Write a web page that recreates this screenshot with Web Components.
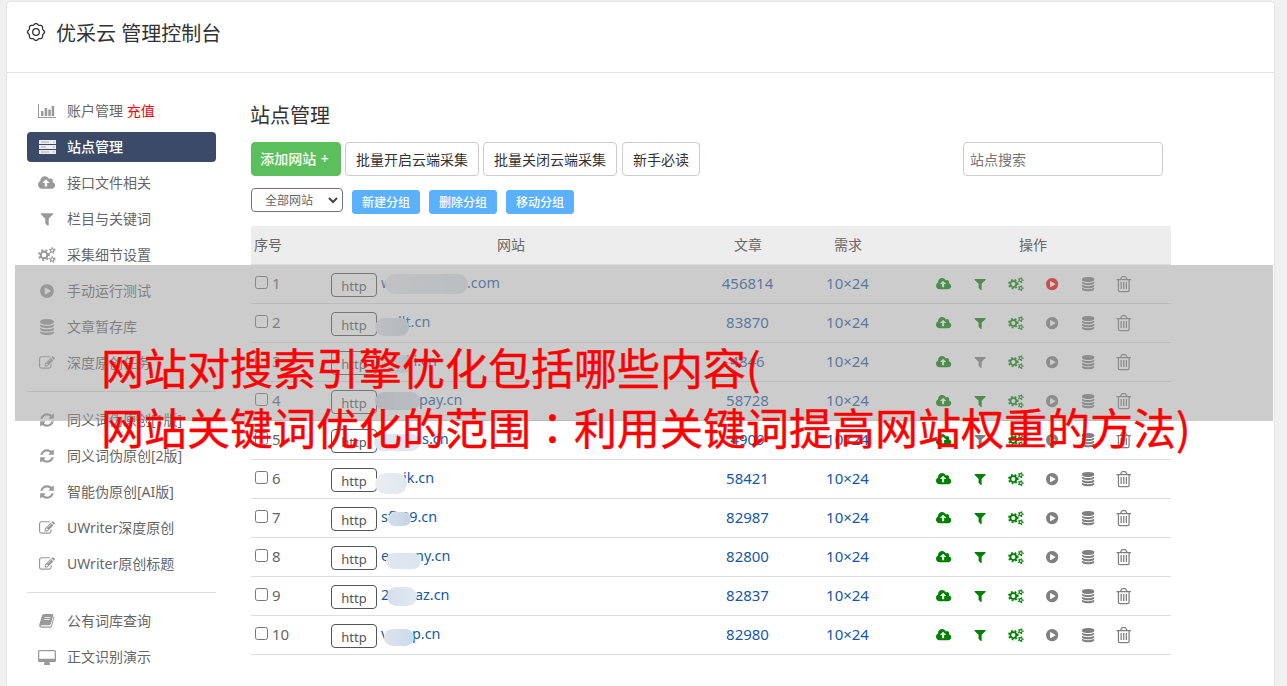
<!DOCTYPE html>
<html lang="zh-CN">
<head>
<meta charset="utf-8">
<title>优采云 管理控制台</title>
<style>
    body {
        margin: 0;
        height: 686px;
        overflow: hidden;
        position: relative;
        background: #f0f0f0;
        color: #666;
        font: 14px/20px "Noto Sans", "Noto Sans CJK SC", sans-serif;
    }
</style>
</head>
<body>
<console-app></console-app>
<title-banner>
    <span>网站对搜索引擎优化包括哪些内容(</span>
    <span slot="second">网站关键词优化的范围<span lang="zh-TW" style="font-family:'Noto Sans CJK TC'">：</span>利用关键词提高网站权重的方法)</span>
</title-banner>

<script>
const gear = (cx, cy, r, w, n) => {
    const step = 2 * Math.PI * (r + w) / (n * 2);
    return `<circle cx="${cx}" cy="${cy}" r="${r}" fill="none" stroke="currentColor" stroke-width="${w}"/>
        <circle cx="${cx}" cy="${cy}" r="${r + w * 0.8}" fill="none" stroke="currentColor" stroke-width="${w}" stroke-dasharray="${step}" stroke-dashoffset="${step / 2}"/>`;
};

// outline of the wavy gear in the page header
const wavyGear = () => {
    const pts = [];
    for (let i = 0; i < 160; i++) {
        const a = i / 160 * 2 * Math.PI;
        const r = 7.9 + 0.6 * Math.cos(8 * a);
        pts.push((9 + r * Math.sin(a)).toFixed(2) + ',' + (9 - r * Math.cos(a)).toFixed(2));
    }
    return `<g fill="none" stroke="currentColor" stroke-width="1.3"><path d="M${pts.join('L')}z"/><circle cx="9" cy="9" r="3.3"/></g>`;
};

// name: [viewBox, width, height, content]
const icons = {
    gear: ['0 0 18 18', 18, 18, wavyGear()],
    chart: ['0 0 18 14', 18, 14, '<path d="M0 0h1v13h17v1H0zM3 7h2.5v5H3zM6.7 4h2.5v8H6.700zM10.300 5.500h2.500v6.500h-2.500zM13.700 2h2.500v10h-2.500z"/>'],
    server: ['0 0 17 14', 17, 14, '<path d="M0 0h17v4H0zM0 5h17v4H0zM0 10h17v4H0z"/><path fill="#3b4a66" opacity=".4" d="M2 1.500h8v1H2zM2 6.500h5v1H2zM2 11.500h8v1H2zM14 1.500h1.500v1H14zM14 6.500h1.500v1H14zM14 11.500h1.500v1H14z"/>'],
    cloud: ['-64 0 1920 1792', 17.100, 16, '<path d="M1216 864q0-14-9-23l-352-352q-9-9-23-9t-23 9l-351 351q-10 12-10 24 0 14 9 23t23 9h224v352q0 13 9.500 22.500t22.500 9.500h192q13 0 22.500-9.500t9.500-22.500v-352h224q13 0 22.500-9.500t9.500-22.500zm640 288q0 159-112.500 271.500t-271.500 112.500h-1088q-185 0-316.500-131.500t-131.500-316.500q0-130 70-240t188-165q-2-30-2-43 0-212 150-362t362-150q156 0 285.500 87t188.500 231q71-62 166-62 106 0 181 75t75 181q0 76-41 138 130 31 213.500 135.500t83.500 238.500z"/>'],
    filter: ['0 0 1792 1792', 16, 16, '<path d="M1595 295q17 41-14 70l-493 493v742q0 42-39 59-13 5-25 5-27 0-45-19l-256-256q-19-19-19-45v-486l-493-493q-31-29-14-70 17-39 59-39h1280q42 0 59 39z"/>'],
    cogs: ['0 0 18 16', 18, 16, gear(6, 8, 3.300, 2, 8) + gear(14.300, 3.500, 1.700, 1.200, 6) + gear(14.300, 12.500, 1.700, 1.200, 6)],
    play: ['0 0 1792 1792', 16, 16, '<path d="M896 128q209 0 385.500 103t279.500 279.500 103 385.500-103 385.500-279.500 279.500-385.500 103-385.500-103-279.500-279.500-103-385.500 103-385.500 279.500-279.500 385.500-103zm384 823q32-18 32-55t-32-55l-544-320q-31-19-64-1-32 19-32 56v640q0 37 32 56 16 8 32 8 17 0 32-9z"/>'],
    database: ['0 0 1792 1792', 16, 16, '<path d="M896 768q237 0 443-43t325-127v170q0 69-103 128t-280 93.500-385 34.500-385-34.500-280-93.500-103-128v-170q119 84 325 127t443 43zm0 768q237 0 443-43t325-127v170q0 69-103 128t-280 93.500-385 34.500-385-34.500-280-93.500-103-128v-170q119 84 325 127t443 43zm0-384q237 0 443-43t325-127v170q0 69-103 128t-280 93.500-385 34.500-385-34.500-280-93.500-103-128v-170q119 84 325 127t443 43zm0-1152q208 0 385 34.500t280 93.500 103 128v128q0 69-103 128t-280 93.500-385 34.500-385-34.500-280-93.500-103-128v-128q0-69 103-128t280-93.500 385-34.500z"/>'],
    edit: ['0 0 1792 1792', 16, 16, '<path d="M888 1184l116-116-152-152-116 116v56h96v96h56zm440-720q-16-16-33 1l-350 350q-17 17-1 33t33-1l350-350q17-17 1-33zm80 594v190q0 119-84.500 203.500t-203.500 84.500h-832q-119 0-203.500-84.500t-84.500-203.500v-832q0-119 84.500-203.500t203.500-84.500h832q63 0 117 25 15 7 18 23 3 17-9 29l-49 49q-14 14-32 8-23-6-45-6h-832q-66 0-113 47t-47 113v832q0 66 47 113t113 47h832q66 0 113-47t47-113v-126q0-13 9-22l64-64q15-15 35-7t20 29zm-96-738l288 288-672 672h-288v-288zm444 132l-92 92-288-288 92-92q28-28 68-28t68 28l152 152q28 28 28 68t-28 68z"/>'],
    refresh: ['0 0 1792 1792', 16, 16, '<path d="M1639 1056q0 5-1 7-64 268-268 434.500t-478 166.500q-146 0-282.500-55t-243.500-157l-129 129q-19 19-45 19t-45-19-19-45v-448q0-26 19-45t45-19h448q26 0 45 19t19 45-19 45l-137 137q71 66 161 102t187 36q134 0 250-65t186-179q11-17 53-117 8-23 30-23h192q13 0 22.500 9.500t9.500 22.500zm25-800v448q0 26-19 45t-45 19h-448q-26 0-45-19t-19-45 19-45l138-138q-148-137-349-137-134 0-250 65t-186 179q-11 17-53 117-8 23-30 23h-199q-13 0-22.500-9.500t-9.500-22.500v-7q65-268 270-434.500t480-166.500q146 0 284 55.500t245 156.500l130-129q19-19 45-19t45 19 19 45z"/>'],
    book: ['0 0 16 14', 16, 14, '<path fill-rule="evenodd" d="M5.200 0h8q1.300 0 1 1.200l-2.300 8.600q-.4 1.400-1.700 1.400H2.500q-1 0-.8.8.1.6 1 .6h8.300q.8 0 1.100-.8L14.800 2q.9.500.6 1.500l-2.400 8.700q-.5 1.600-2 1.600H2.600Q0 13.800.2 11L3 1.500Q3.600 0 5.200 0zM5.800 3l-.2.800h5.800l.2-.8zM5.200 5.300l-.2.800h5.800l.2-.8z"/>'],
    desktop: ['0 0 18 15', 18, 15, '<path fill-rule="evenodd" d="M1.500 0h15Q18 0 18 1.500v9q0 1.500-1.500 1.500H11.300l.7 2v1H6v-1l.7-2H1.500Q0 12 0 10.500v-9Q0 0 1.500 0zM1.300 1.300v7.500h15.400V1.300z"/>'],
    trash: ['0 0 16 17', 16, 17, '<g fill="none" stroke="currentColor" stroke-width="1.300"><path d="M.5 3.800h15M4.600 3.500l1.200-2.200q.3-.6.9-.6h2.600q.6 0 .9.600l1.200 2.200M2.500 4v10.700q0 1.500 1.500 1.500h8q1.500 0 1.500-1.500V4M5.300 6.300v7M8 6.300v7M10.700 6.300v7"/></g>']
};

class UiIcon extends HTMLElement {
    connectedCallback() {
        const [box, w, h, content] = icons[this.getAttribute('name')];
        const scale = parseFloat(this.getAttribute('scale') || 1);
        this.attachShadow({mode: 'open'}).innerHTML = `
            <style>
                :host { display: inline-flex; align-items: center; justify-content: center; }
                svg { display: block; fill: currentColor; overflow: visible; }
            </style>
            <svg viewBox="${box}" width="${w * scale}" height="${h * scale}">${content}</svg>`;
    }
}
customElements.define('ui-icon', UiIcon);

class MenuItem extends HTMLElement {
    connectedCallback() {
        this.attachShadow({mode: 'open'}).innerHTML = `
            <style>
                :host { display: flex; align-items: center; height: 30px; padding-left: 10px; border-radius: 4px; white-space: nowrap; }
                :host([active]) { background: #3b4a66; color: #fff; font-weight: 500; }
                ui-icon { width: 20px; margin-right: 10px; color: #999; }
                :host([active]) ui-icon { color: #eee; }
            </style>
            <ui-icon name="${this.getAttribute('icon')}"></ui-icon><span><slot></slot></span>`;
    }
}
customElements.define('menu-item', MenuItem);

class SideMenu extends HTMLElement {
    connectedCallback() {
        this.attachShadow({mode: 'open'}).innerHTML = `
            <style>
                :host { display: flex; flex-direction: column; gap: 6px; width: 189px; }
                hr { width: 100%; height: 1px; margin: 7px 0; border: none; background: #ddd; }
                b { font-weight: 400; color: #f00; }
            </style>
            <menu-item icon="chart">账户管理 <b>充值</b></menu-item>
            <menu-item icon="server" active>站点管理</menu-item>
            <menu-item icon="cloud">接口文件相关</menu-item>
            <menu-item icon="filter">栏目与关键词</menu-item>
            <menu-item icon="cogs">采集细节设置</menu-item>
            <menu-item icon="play">手动运行测试</menu-item>
            <menu-item icon="database">文章暂存库</menu-item>
            <menu-item icon="edit">深度原创任务</menu-item>
            <hr>
            <menu-item icon="refresh">同义词伪原创[1版]</menu-item>
            <menu-item icon="refresh">同义词伪原创[2版]</menu-item>
            <menu-item icon="refresh">智能伪原创[AI版]</menu-item>
            <menu-item icon="edit">UWriter深度原创</menu-item>
            <menu-item icon="edit">UWriter原创标题</menu-item>
            <hr>
            <menu-item icon="book">公有词库查询</menu-item>
            <menu-item icon="desktop">正文识别演示</menu-item>`;
    }
}
customElements.define('side-menu', SideMenu);

class UiButton extends HTMLElement {
    connectedCallback() {
        this.attachShadow({mode: 'open'}).innerHTML = `
            <style>
                :host { display: flex; align-items: center; justify-content: center; box-sizing: border-box; height: 34px; padding-top: 2px; border: 1px solid #ccc; border-radius: 4px; color: #333; background: #fff; white-space: nowrap; }
                :host([kind=add]) { padding: 0 3px 0 0; background: #5bc05b; border-color: #5bc05b; color: #fff; font-weight: 500; word-spacing: 1px; }
                :host([kind=small]) { width: 68px; height: 24px; background: #5bb0ff; border-color: #5bb0ff; color: #fff; font-size: 12px; font-weight: 500; border-radius: 3px; }
            </style>
            <span><slot></slot></span>`;
    }
}
customElements.define('ui-button', UiButton);

class SiteRow extends HTMLElement {
    connectedCallback() {
        const s = this.site;
        const [px, py, pw, ph, c1, c2] = s.blur;
        const actions = ['cloud', 'filter', 'cogs', 'play', 'database', 'trash'];
        const color = (name, i) => i < 3 && !(name === 'filter' && s.grayFilter) ? 'green' : (name === 'play' && s.running ? 'red' : '#808080');
        this.attachShadow({mode: 'open'}).innerHTML = `
            <style>
                :host { display: grid; grid-template-columns: 80px 360px 114px 86px 280px; align-items: center; height: 38px; border-bottom: 1px solid #ddd; font-size: 15px; }
                .no { display: flex; align-items: center; padding: 0 0 2px 4px; gap: 4px; }
                input { width: 13px; height: 13px; margin: 0 0 1px; }
                .site { display: flex; align-items: center; position: relative; color: #1558a6; height: 38px; font-size: 14.4px; }
                .proto { box-sizing: border-box; width: 46px; height: 24px; border: 1px solid #555; border-radius: 4px; margin: 2px 4px 0 0; font-size: 13px; line-height: 25px; text-align: center; color: #555; background: #fff; }
                .head { display: inline-block; }
                .head, .tail { padding-bottom: 2px; }
                .blur { position: absolute; border-radius: 12px; }
                .num { padding: 0 1px 2px 0; text-align: center; color: #1558a6; }
                .ops { display: flex; padding-left: 35px; }
                .ops ui-icon { width: 36px; }
            </style>
            <div class="no"><input type="checkbox"><span>${s.id}</span></div>
            <div class="site">
                <span class="proto">http</span>
                <span class="head" style="width:${s.tailX - 381}px">${s.head}</span><span class="tail">${s.tail}</span>
                <i class="blur" style="left:${px - 331}px;top:${py}px;width:${pw}px;height:${ph}px;background:linear-gradient(90deg,${c1},${c2})"></i>
            </div>
            <div class="num">${s.articles}</div>
            <div class="num">10×24</div>
            <div class="ops">${actions.map((name, i) => `<ui-icon name="${name}" scale="${name === 'trash' ? 0.97 : 0.89}" style="color:${color(name, i)}"></ui-icon>`).join('')}</div>`;
    }
}
customElements.define('site-row', SiteRow);

// blur: x, y inside the row, width, height, two colours
const sites = [
    {id: 1, head: 'w', tail: '.com', tailX: 467, articles: 456814, running: true, blur: [385, 9, 83, 20, '#e6eaee', '#dde3e9']},
    {id: 2, head: '', tail: 'llt.cn', tailX: 398, articles: 83870, blur: [375, 14, 34, 18, '#e2e6ea', '#ced9e6']},
    {id: 3, head: '', tail: 'ili.cn', tailX: 406, articles: 4846, grayFilter: true, blur: [377, 12, 36, 18, '#e9edf1', '#d9e2eb']},
    {id: 4, head: '', tail: 'pay.cn', tailX: 419, articles: 58728, blur: [375, 10, 45, 18, '#ced6de', '#d9e0e8']},
    {id: 5, head: '', tail: 's.cn', tailX: 422, articles: 4909, grayFilter: true, blur: [374, 13, 46, 17, '#dbe4ef', '#e0e7f0']},
    {id: 6, head: '', tail: 'ik.cn', tailX: 403, articles: 58421, blur: [375, 13, 32, 21, '#ebeef1', '#e0e7f0']},
    {id: 7, head: 'sfi', tail: '39.cn', tailX: 401, articles: 82987, blur: [388, 13, 23, 14, '#d3dfea', '#c4d5e6']},
    {id: 8, head: 'e', tail: 'ny.cn', tailX: 415, articles: 82800, blur: [386, 15, 35, 16, '#e0e7ef', '#dce4ee']},
    {id: 9, head: '2', tail: 'az.cn', tailX: 415, articles: 82837, blur: [387, 10, 30, 19, '#d5dfea', '#e3e9f2']},
    {id: 10, head: 'v', tail: 'p.cn', tailX: 412, articles: 82980, blur: [384, 13, 30, 17, '#dee4ea', '#c8dbee']}
];

class SiteTable extends HTMLElement {
    connectedCallback() {
        this.attachShadow({mode: 'open'}).innerHTML = `
            <style>
                :host { display: block; width: 920px; }
                .header { display: grid; grid-template-columns: 80px 360px 114px 86px 280px; align-items: center; height: 38px; background: #ededed; border-bottom: 1px solid #ddd; text-align: center; }
                .header :first-child { text-align: left; padding-left: 3px; }
                .header :last-child { padding-left: 4px; }
            </style>
            <div class="header"><span>序号</span><span>网站</span><span>文章</span><span>需求</span><span>操作</span></div>
            <div class="rows"></div>`;

        const $rows = this.shadowRoot.querySelector('.rows');
        sites.forEach(site => {
            const row = document.createElement('site-row');
            row.site = site;
            $rows.appendChild(row);
        });
    }
}
customElements.define('site-table', SiteTable);

class ConsoleApp extends HTMLElement {
    connectedCallback() {
        this.attachShadow({mode: 'open'}).innerHTML = `
            <style>
                :host { display: block; box-sizing: border-box; width: 1269px; height: 685px; margin: 1px 0 0 6px; border: 1px solid #e4e4e4; border-bottom: none; border-radius: 5px 5px 0 0; background: #fff; }
                header { display: flex; align-items: center; box-sizing: border-box; height: 71px; padding: 0 0 7px 20px; border-bottom: 1px solid #e4e4e4; color: #333; font-size: 20px; }
                header ui-icon { margin: -4px 11px 0 0; }
                header span { line-height: 28px; }
                .body { display: flex; gap: 35px; padding: 23px 0 0 20px; }
                h1 { margin: 6px 0 12px -1px; font-size: 20px; line-height: 28px; font-weight: 400; color: #333; }
                main { width: 920px; }
                .bar { display: flex; gap: 4px; }
                .search { box-sizing: border-box; width: 200px; height: 34px; margin: 0 8px 0 auto; padding: 0 6px; border: 1px solid #ccc; border-radius: 4px; font: inherit; }
                .search::placeholder { color: #757575; }
                .groups { display: flex; gap: 9px; margin: 12px 0; align-items: flex-end; height: 26px; }
                .select { display: flex; align-items: center; justify-content: space-between; box-sizing: border-box; width: 92px; height: 24px; margin-bottom: 2px; padding: 1px 4px 0 13px; border: 1px solid #767676; border-radius: 4px; font-size: 12px; }
            </style>
            <header><ui-icon name="gear"></ui-icon><span>优采云 管理控制台</span></header>
            <div class="body">
                <side-menu></side-menu>
                <main>
                    <h1>站点管理</h1>
                    <div class="bar">
                        <ui-button kind="add" style="width:90px">添加网站 +</ui-button>
                        <ui-button style="width:134px">批量开启云端采集</ui-button>
                        <ui-button style="width:134px">批量关闭云端采集</ui-button>
                        <ui-button style="width:78px;margin-left:1px">新手必读</ui-button>
                        <input class="search" placeholder="站点搜索">
                    </div>
                    <div class="groups">
                        <div class="select">全部网站<svg width="10" height="7" viewBox="0 0 10 7"><path d="M1 1l4 4 4-4" fill="none" stroke="#444" stroke-width="2"/></svg></div>
                        <ui-button kind="small">新建分组</ui-button>
                        <ui-button kind="small">删除分组</ui-button>
                        <ui-button kind="small">移动分组</ui-button>
                    </div>
                    <site-table></site-table>
                </main>
            </div>`;
    }
}
customElements.define('console-app', ConsoleApp);

// grey band with the two-line title, lies over the console
class TitleBanner extends HTMLElement {
    connectedCallback() {
        this.attachShadow({mode: 'open'}).innerHTML = `
            <style>
                :host { display: block; position: absolute; left: 15px; top: 265px; width: 1258px; height: 156px; background: rgba(153, 153, 153, .5); }
                .text { padding: 71px 0 0 86px; color: #f00; font: 43px/60px "Noto Sans CJK SC", sans-serif; -webkit-text-stroke: .4px #f00; white-space: nowrap; }
            </style>
            <div class="text"><div><slot></slot></div><div><slot name="second"></slot></div></div>`;
    }
}
customElements.define('title-banner', TitleBanner);
</script>
</body>
</html>
